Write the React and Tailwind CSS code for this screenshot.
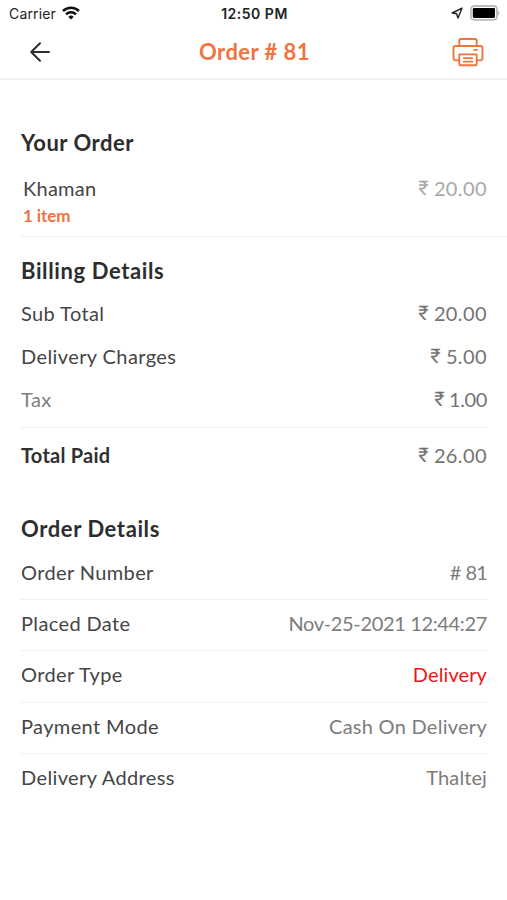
import React from 'react';
import clsx from 'clsx';

const billing = [
  { label: 'Sub Total', value: '20.00' },
  { label: 'Delivery Charges', value: '5.00' },
  { label: 'Tax', value: '1.00', muted: true, tracking: 'tracking-[-0.4px]' },
];

const details = [
  { label: 'Order Number', value: '# 81', valueClass: 'text-[#7c7c7c] tracking-[-0.9px] [word-spacing:1px]' },
  { label: 'Placed Date', value: 'Nov-25-2021 12:44:27', valueClass: 'text-[#7c7c7c] tracking-[-0.35px]' },
  { label: 'Order Type', value: 'Delivery', valueClass: 'text-[#f01418] tracking-[0.1px]' },
  { label: 'Payment Mode', value: 'Cash On Delivery', valueClass: 'text-[#7c7c7c] tracking-[0.27px]' },
  { label: 'Delivery Address', value: 'Thaltej', valueClass: 'text-[#7c7c7c] tracking-[0.1px]' },
];

function StatusBar() {
  return (
    <div className="h-[27px] grid grid-cols-3 items-center pl-[9px] pr-[7px] font-['Inter',sans-serif] text-[14px] text-[#222]">
      <div className="flex items-center gap-[6px]">
        <span className="tracking-[0.15px]">Carrier</span>
        <svg className="w-[18px] h-[14px] -mt-[2px]" viewBox="0 0 18 14" fill="none" stroke="#111" strokeWidth="2.5">
          <path d="M1 5a11.4 11.4 0 0 1 16 0" />
          <path d="M4 8.4a7.1 7.1 0 0 1 10 0" />
          <path d="M9 13.6 6.3 10.9a3.9 3.9 0 0 1 5.4 0Z" fill="#111" stroke="none" />
        </svg>
      </div>
      <span className="text-center font-semibold text-[14px] tracking-[0.5px] whitespace-nowrap">12:50 PM</span>
      <div className="flex items-center justify-end gap-[7px] -mt-px">
        <svg className="w-[12px] h-[12px]" viewBox="0 0 12 12" fill="none" stroke="#222" strokeWidth="1.4" strokeLinejoin="round">
          <path d="M11 1.2 1.2 6l4.4.8L7 11Z" />
        </svg>
        <svg className="w-[30px] h-[16px]" viewBox="0 0 30 16">
          <rect x="0.9" y="1" width="26" height="13.8" rx="3.2" fill="#fff" stroke="#bbb" strokeWidth="1.8" />
          <rect x="2.8" y="2.9" width="22.2" height="10" rx="1.4" fill="#000" />
          <path d="M27.9 5.4c1.9.8 1.9 4.2 0 5Z" fill="#bbb" />
        </svg>
      </div>
    </div>
  );
}

function Header() {
  return (
    <div className="h-[53px] grid grid-cols-3 items-center pl-[30px] pr-[23px] pb-[2px] border-b-2 border-[#efefef]">
      <svg className="w-[20px] h-[20px]" viewBox="0 0 20 20" fill="none" stroke="#2d2d2d" strokeWidth="2" strokeLinecap="round" strokeLinejoin="round">
        <path d="M19 10H1.2M10 1.2 1.2 10l8.8 8.8" />
      </svg>
      <h1 className="justify-self-center -ml-[5px] text-[22px] font-bold whitespace-nowrap tracking-[0.45px] text-[#ee7440]">Order # 81</h1>
      <svg className="w-[32px] h-[30px] justify-self-end" viewBox="0 0 32 30" fill="none" stroke="#ee7440" strokeWidth="1.9" strokeLinejoin="round" strokeLinecap="round">
        <path d="M7.3 9V3.6q0-1.6 1.6-1.6h14.2q1.6 0 1.6 1.6V9" />
        <path d="M7.3 23.4H3.8q-2.3 0-2.3-2.3v-9.8Q1.5 9 3.8 9h24.4q2.3 0 2.3 2.3v9.8q0 2.3-2.3 2.3h-3.5" />
        <path d="M7.3 17.4h17.4v9.3q0 1.6-1.6 1.6H8.9q-1.6 0-1.6-1.6Z" />
        <path d="M11.8 21.1h8.4M11.8 24.6h8.4M22.3 12.9h2.6" />
      </svg>
    </div>
  );
}

function Price({ value, tracking = 'tracking-[0.4px]' }) {
  return (
    <span className={clsx('flex gap-[5px]', tracking)}>
      <span className="font-['Roboto',sans-serif]">₹</span>
      <span>{value}</span>
    </span>
  );
}

export default function App() {
  return (
    <div className="h-[900px] w-full overflow-hidden bg-white font-['Lato',sans-serif] text-[20px] text-[#454545]">
      <StatusBar />
      <Header />

      <main className="pl-[20px]">
        {/* Ordered items */}
        <section className="h-[157px] pt-[43px] border-b border-[#f0f0f0]">
          <h2 className="h-[40px] leading-[40px] pl-px text-[22px] font-bold tracking-[0.5px] text-[#2d2d2d]">Your Order</h2>
          <div className="flex items-center justify-between h-[30px] mt-[10px] pl-[3px] pr-[20px]">
            <span className="tracking-[0.25px]">Khaman</span>
            <span className="text-[#a8a8a8]"><Price value="20.00" /></span>
          </div>
          <p className="h-[24px] leading-[24px] mt-px pl-[3px] text-[17px] font-bold tracking-[-0.1px] text-[#ee7440]">1 item</p>
        </section>

        {/* Billing */}
        <section className="pr-[19px]">
          <h2 className="h-[40px] leading-[40px] mt-[14px] pl-px text-[22px] font-bold tracking-[0.62px] text-[#2d2d2d]">Billing Details</h2>
          <div className="h-[137px] border-b border-[#f0f0f0]">
            {billing.map((row) => (
              <div key={row.label} className="flex items-center justify-between h-[43px] px-px">
                <span className={clsx('tracking-[0.4px]', row.muted && 'text-[#808080]')}>{row.label}</span>
                <span className="text-[#747474]"><Price value={row.value} tracking={row.tracking} /></span>
              </div>
            ))}
          </div>
          <div className="flex items-center justify-between h-[54px] px-px">
            <span className="font-bold tracking-[0.25px] text-[#303030]">Total Paid</span>
            <span className="text-[#747474]"><Price value="26.00" /></span>
          </div>
        </section>

        {/* Order info */}
        <section className="pr-[19px]">
          <h2 className="h-[40px] leading-[40px] mt-[27px] pl-px text-[22px] font-bold tracking-[0.6px] text-[#2d2d2d]">Order Details</h2>
          {details.map((row) => (
            <div key={row.label} className="flex items-center justify-between h-[51.2px] pb-[4px] px-px border-b border-[#f0f0f0] last:border-0">
              <span className="tracking-[0.38px]">{row.label}</span>
              <span className={row.valueClass}>{row.value}</span>
            </div>
          ))}
        </section>
      </main>
    </div>
  );
}
